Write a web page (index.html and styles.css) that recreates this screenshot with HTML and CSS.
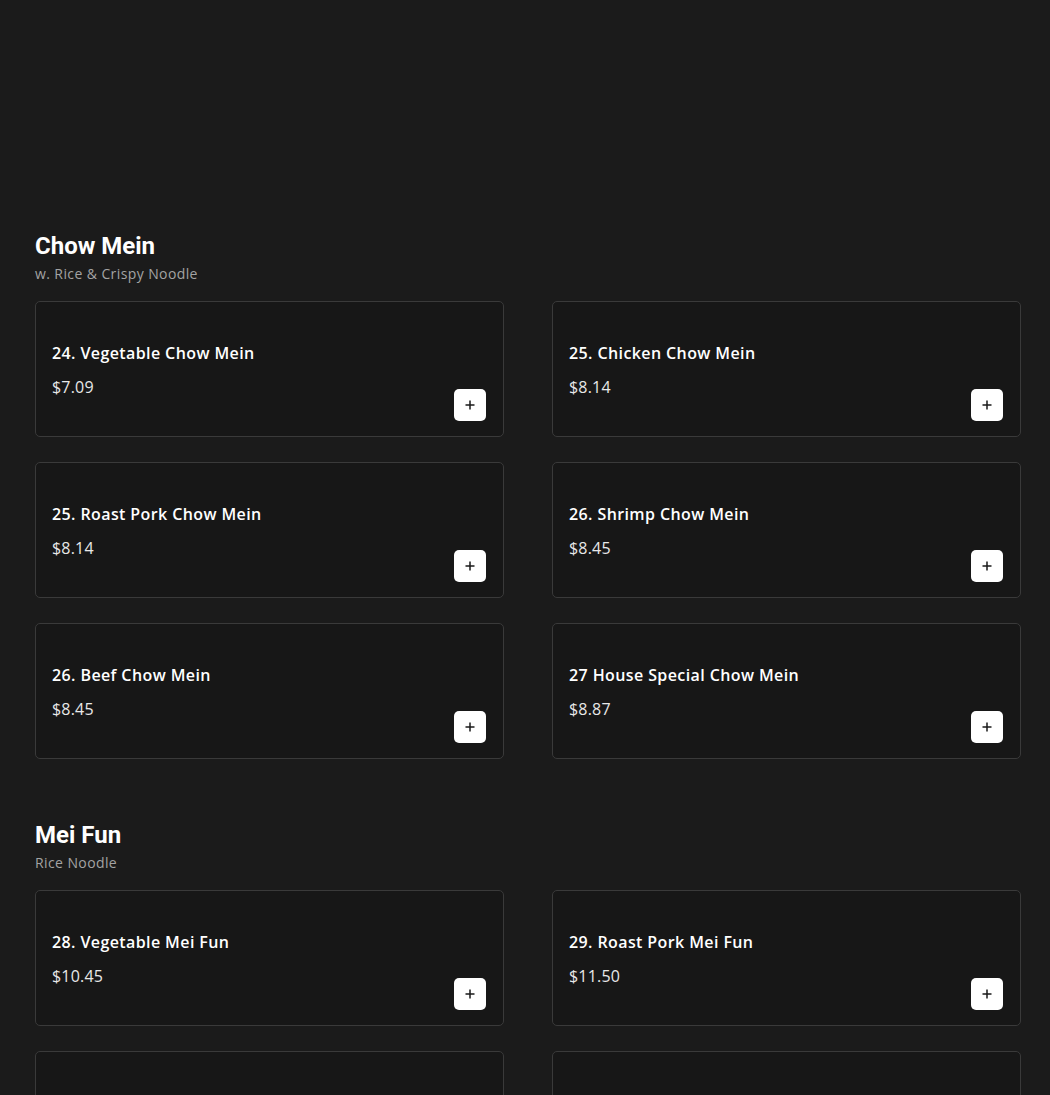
FILE: index.html
```html
<!DOCTYPE html>
<html lang="en">
<head>
<meta charset="utf-8">
<title>Menu</title>
<link rel="stylesheet" href="styles.css">
</head>
<body>
<main class="menu">
  <section class="section">
    <header class="section-head">
      <h2 class="section-title">Chow Mein</h2>
      <p class="section-sub">w. Rice &amp; Crispy Noodle</p>
    </header>
    <div class="grid">
      <div class="card"><div class="info"><div class="name">24. Vegetable Chow Mein</div><div class="price">$7.09</div></div><button class="add"><svg viewBox="0 0 12 12" width="12" height="12"><path d="M6 1.5v9M1.5 6h9" stroke="#1a1a1a" stroke-width="1.5" fill="none"/></svg></button></div>
      <div class="card"><div class="info"><div class="name">25. Chicken Chow Mein</div><div class="price">$8.14</div></div><button class="add"><svg viewBox="0 0 12 12" width="12" height="12"><path d="M6 1.5v9M1.5 6h9" stroke="#1a1a1a" stroke-width="1.5" fill="none"/></svg></button></div>
      <div class="card"><div class="info"><div class="name">25. Roast Pork Chow Mein</div><div class="price">$8.14</div></div><button class="add"><svg viewBox="0 0 12 12" width="12" height="12"><path d="M6 1.5v9M1.5 6h9" stroke="#1a1a1a" stroke-width="1.5" fill="none"/></svg></button></div>
      <div class="card"><div class="info"><div class="name">26. Shrimp Chow Mein</div><div class="price">$8.45</div></div><button class="add"><svg viewBox="0 0 12 12" width="12" height="12"><path d="M6 1.5v9M1.5 6h9" stroke="#1a1a1a" stroke-width="1.5" fill="none"/></svg></button></div>
      <div class="card"><div class="info"><div class="name">26. Beef Chow Mein</div><div class="price">$8.45</div></div><button class="add"><svg viewBox="0 0 12 12" width="12" height="12"><path d="M6 1.5v9M1.5 6h9" stroke="#1a1a1a" stroke-width="1.5" fill="none"/></svg></button></div>
      <div class="card"><div class="info"><div class="name">27 House Special Chow Mein</div><div class="price">$8.87</div></div><button class="add"><svg viewBox="0 0 12 12" width="12" height="12"><path d="M6 1.5v9M1.5 6h9" stroke="#1a1a1a" stroke-width="1.5" fill="none"/></svg></button></div>
    </div>
  </section>
  <section class="section">
    <header class="section-head">
      <h2 class="section-title">Mei Fun</h2>
      <p class="section-sub">Rice Noodle</p>
    </header>
    <div class="grid">
      <div class="card"><div class="info"><div class="name">28. Vegetable Mei Fun</div><div class="price">$10.45</div></div><button class="add"><svg viewBox="0 0 12 12" width="12" height="12"><path d="M6 1.5v9M1.5 6h9" stroke="#1a1a1a" stroke-width="1.5" fill="none"/></svg></button></div>
      <div class="card"><div class="info"><div class="name">29. Roast Pork Mei Fun</div><div class="price">$11.50</div></div><button class="add"><svg viewBox="0 0 12 12" width="12" height="12"><path d="M6 1.5v9M1.5 6h9" stroke="#1a1a1a" stroke-width="1.5" fill="none"/></svg></button></div>
      <div class="card"><div class="info"><div class="name">30. Chicken Mei Fun</div><div class="price">$11.50</div></div><button class="add"><svg viewBox="0 0 12 12" width="12" height="12"><path d="M6 1.5v9M1.5 6h9" stroke="#1a1a1a" stroke-width="1.5" fill="none"/></svg></button></div>
      <div class="card"><div class="info"><div class="name">31. House Special Mei Fun</div><div class="price">$12.55</div></div><button class="add"><svg viewBox="0 0 12 12" width="12" height="12"><path d="M6 1.5v9M1.5 6h9" stroke="#1a1a1a" stroke-width="1.5" fill="none"/></svg></button></div>
    </div>
  </section>
</main>
</body>
</html>
```

FILE: styles.css
```css
html, body {
  margin: 0;
  padding: 0;
  background: #1b1b1b;
}
body {
  font-family: "Open Sans", "Noto Sans", "Liberation Sans", sans-serif;
  color: #ffffff;
}
.menu {
  padding: 232px 29px 0 35px;
  display: flex;
  flex-direction: column;
  gap: 62px;
}
.section-head {
  margin-bottom: 17px;
}
.section-title {
  margin: 0;
  font-family: Roboto, "Liberation Sans", sans-serif;
  font-weight: 700;
  font-size: 24px;
  line-height: 28px;
  color: #ffffff;
}
.section-sub {
  margin: 4px 0 0;
  font-size: 14px;
  line-height: 20px;
  letter-spacing: 0.4px;
  color: #a3a3a3;
}
.grid {
  display: grid;
  grid-template-columns: 469px 469px;
  column-gap: 48px;
  row-gap: 25px;
}
.card {
  box-sizing: border-box;
  height: 136px;
  background: #171717;
  border: 1px solid #3a3a3a;
  border-radius: 5px;
  padding: 39px 17px 15px 16px;
  display: flex;
  justify-content: space-between;
  align-items: flex-end;
}
.info {
  align-self: flex-start;
  display: flex;
  flex-direction: column;
  gap: 10px;
}
.name {
  font-size: 16px;
  line-height: 24px;
  font-weight: 600;
  letter-spacing: 0.4px;
  color: #ffffff;
}
.price {
  font-size: 16px;
  line-height: 24px;
  font-weight: 400;
  letter-spacing: 0.2px;
  color: #e8e8e8;
}
.add {
  width: 32px;
  height: 32px;
  padding: 0;
  border: none;
  border-radius: 5px;
  background: #ffffff;
  display: flex;
  align-items: center;
  justify-content: center;
  cursor: pointer;
}
```
